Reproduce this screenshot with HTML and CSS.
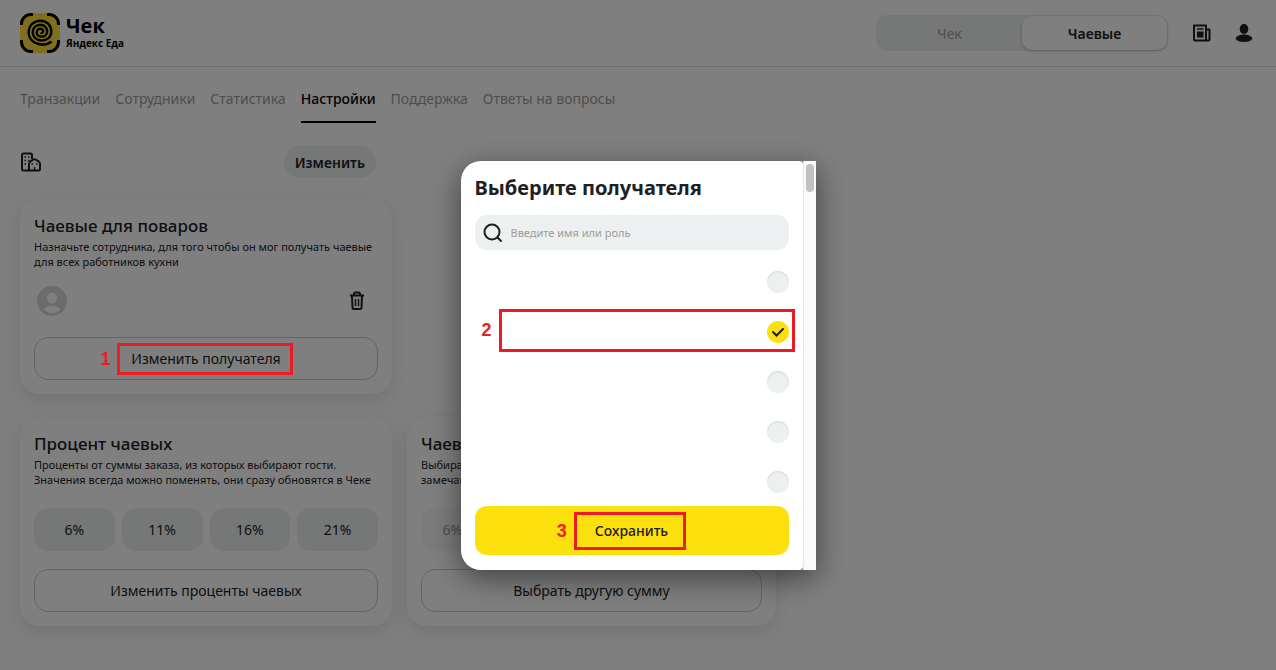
FILE: index.html
```html
<!DOCTYPE html>
<html lang="ru">
<head>
  <meta charset="utf-8">
  <meta name="viewport" content="width=device-width, initial-scale=1">
  <title>Чаевые — Настройки</title>
  <link rel="stylesheet" href="styles.css">
</head>
<body>
  <header class="header">
    <a class="logo" href="#">
      <svg width="40" height="40" viewBox="0 0 40 40" fill="none" stroke="#000">
        <rect width="40" height="40" rx="10" fill="#ffe03a" stroke="none"/>
        <path stroke-width="3" d="M1.5 12V11A9.500 9.500 0 0 1 11 1.500H13M27 1.500H29A9.500 9.500 0 0 1 38.500 11V12M38.500 27V29A9.500 9.500 0 0 1 29 38.500H27M13 38.500H11A9.500 9.500 0 0 1 1.500 29V27"/>
        <path stroke-width="2.400" d="M31.500 28.500C28.500 31 25 31.800 21 31.500C14 31 8.700 26 8.700 19.500C8.700 12.500 14 7.700 20.500 7.700C27 7.700 31.300 12.500 31.300 18.500C31.300 24 27 27.500 21.500 27.500C16.500 27.500 12.700 24 12.700 19.500C12.700 15 16 11.800 20.300 11.800C24.500 11.800 27.200 15 27.200 18.500C27.200 21.800 24.500 23.600 21.500 23.600C18.700 23.600 16.700 21.800 16.700 19.400C16.700 17.200 18.300 15.700 20.300 15.700C22.200 15.700 23.300 17 23.200 18.500C23.100 19.700 22 20.300 20.500 20"/>
      </svg>
      <span class="logo-text">
        <span class="logo-name">Чек</span>
        <span class="logo-brand">Яндекс Еда</span>
      </span>
    </a>
    <div class="header-right">
      <div class="switch">
        <button class="switch-item" type="button">Чек</button>
        <button class="switch-item switch-active" type="button">Чаевые</button>
      </div>
      <button class="icon-button" type="button" aria-label="Новости">
        <svg width="20" height="20" viewBox="0 0 20 20" fill="none" stroke="#21201f" stroke-width="2" stroke-linejoin="round">
          <path d="M2 2.500H14V17.500H3A1 1 0 0 1 2 16.500ZM14 6.500H17.500V16.500A1 1 0 0 1 16.500 17.500H14"/>
          <path d="M5 6H11.500" stroke-width="1.500"/>
          <rect x="5" y="8.500" width="6.500" height="6" fill="#21201f" stroke="none"/>
        </svg>
      </button>
      <button class="icon-button" type="button" aria-label="Профиль">
        <svg width="20" height="20" viewBox="0 0 20 20" fill="#21201f">
          <ellipse cx="10" cy="6" rx="4.300" ry="5"/>
          <ellipse cx="10" cy="15.300" rx="8.200" ry="3.700"/>
        </svg>
      </button>
    </div>
  </header>

  <nav class="tabs">
    <a class="tab" href="#">Транзакции</a>
    <a class="tab" href="#">Сотрудники</a>
    <a class="tab" href="#">Статистика</a>
    <a class="tab tab-active" href="#">Настройки</a>
    <a class="tab" href="#">Поддержка</a>
    <a class="tab" href="#">Ответы на вопросы</a>
  </nav>

  <main class="content">
    <div class="place">
      <svg width="22" height="20" viewBox="0 0 22 20" fill="none" stroke="#21201f" stroke-width="2" stroke-linejoin="round">
        <path d="M9 18.500H3.500A1.500 1.500 0 0 1 2 17V3A1.500 1.500 0 0 1 3.500 1.500H10.500A1.500 1.500 0 0 1 12 3V7"/>
        <path d="M9 18.500V11.500C9 10 13 7.300 14.500 7.300C16 7.300 20 10 20 11.500V17A1.500 1.500 0 0 1 18.500 18.500Z"/>
        <path d="M4.500 5H6M8 5H9.500M4.500 8.500H6M8 8.500H9.500M4.500 12H6M11.500 12H13M16 12H17.500" stroke-width="1.500"/>
        <path d="M14.500 18V15" stroke-width="1.500"/>
      </svg>
      <button class="pill" type="button">Изменить</button>
    </div>

    <div class="cards">
      <section class="card">
        <h2 class="card-title">Чаевые для поваров</h2>
        <p class="card-text">Назначьте сотрудника, для того чтобы он мог получать чаевые для всех работников кухни</p>
        <div class="person">
          <svg width="30" height="30" viewBox="0 0 30 30">
            <circle cx="15" cy="15" r="15" fill="#d4d6da"/>
            <ellipse cx="15" cy="12" rx="5" ry="5.500" fill="#fff"/>
            <path d="M7 23.500C8.500 18.500 21.500 18.500 23.500 23.500C19 28.500 11.500 28.500 7 23.500Z" fill="#fff"/>
          </svg>
          <button class="icon-button" type="button" aria-label="Удалить">
            <svg width="14" height="20" viewBox="0 0 14 20" fill="none" stroke="#21201f" stroke-width="2">
              <path d="M0 4.500H14M4 4V3A1.500 1.500 0 0 1 5.500 1.500H8.500A1.500 1.500 0 0 1 10 3V4M2 5L2.500 16.500A1.500 1.500 0 0 0 4 18H10A1.500 1.500 0 0 0 11.500 16.500L12 5"/>
              <path d="M5.500 8V15M8.500 8V15" stroke-width="1.500"/>
            </svg>
          </button>
        </div>
        <button class="outline-button" type="button">
          <span class="marked">Изменить получателя<span class="mark mark-one"><b class="mark-number">1</b></span></span>
        </button>
      </section>

      <section class="card card-second-row">
        <h2 class="card-title">Процент чаевых</h2>
        <p class="card-text">Проценты от суммы заказа, из которых выбирают гости. Значения всегда можно поменять, они сразу обновятся в Чеке</p>
        <div class="chips">
          <span class="chip">6%</span>
          <span class="chip">11%</span>
          <span class="chip">16%</span>
          <span class="chip">21%</span>
        </div>
        <button class="outline-button" type="button">Изменить проценты чаевых</button>
      </section>

      <section class="card card-second-row">
        <h2 class="card-title">Чаевые</h2>
        <p class="card-text">Выбирайте сумму<br>замечания</p>
        <div class="chips chips-wide">
          <span class="chip chip-muted">6%</span>
        </div>
        <button class="outline-button" type="button">Выбрать другую сумму</button>
      </section>
    </div>
  </main>

  <div class="overlay">
    <div class="modal" role="dialog" aria-labelledby="modal-title">
      <form class="modal-body">
        <h1 class="modal-title" id="modal-title">Выберите получателя</h1>
        <label class="search">
          <svg width="20" height="20" viewBox="0 0 20 20" fill="none" stroke="#21201f" stroke-width="2" stroke-linecap="round">
            <circle cx="9" cy="9" r="7.500"/>
            <path d="M14.500 14.500L18 18"/>
          </svg>
          <input class="search-input" type="text" placeholder="Введите имя или роль" aria-label="Поиск получателя">
        </label>
        <div class="people">
          <label class="option"><input class="radio" type="radio" name="person" aria-label="Получатель 1"></label>
          <label class="option">
            <input class="radio" type="radio" name="person" aria-label="Получатель 2" checked>
            <span class="mark mark-two"><b class="mark-number">2</b></span>
          </label>
          <label class="option"><input class="radio" type="radio" name="person" aria-label="Получатель 3"></label>
          <label class="option"><input class="radio" type="radio" name="person" aria-label="Получатель 4"></label>
          <label class="option option-last"><input class="radio" type="radio" name="person" aria-label="Получатель 5"></label>
        </div>
        <button class="save" type="button">
          <span class="marked">Сохранить<span class="mark mark-three"><b class="mark-number">3</b></span></span>
        </button>
      </form>
      <div class="scrollbar"><div class="scrollbar-thumb"></div></div>
    </div>
  </div>
</body>
</html>
```
FILE: styles.css
```css
* {
  box-sizing: border-box;
}

body {
  margin: 0;
  min-height: 100vh;
  background: #fff;
  color: #21201f;
  font-family: "Noto Sans", "Open Sans", sans-serif;
  font-size: 14px;
}

button {
  padding: 0;
  border: none;
  background: none;
  color: inherit;
  font: inherit;
  cursor: pointer;
}

a {
  color: inherit;
  text-decoration: none;
}

svg {
  display: block;
}

/* Header */
.header {
  display: flex;
  align-items: center;
  justify-content: space-between;
  height: 67px;
  padding: 0 22px 0 20px;
  border-bottom: 1px solid #dcdee0;
}

.logo {
  display: flex;
  align-items: center;
  gap: 6px;
  color: #000;
}

.logo-text {
  display: flex;
  flex-direction: column;
  font-family: "Open Sans", sans-serif;
  font-weight: 700;
}

.logo-name {
  font-size: 20px;
  line-height: 20px;
}

.logo-brand {
  font-size: 10px;
  line-height: 14px;
}

.header-right {
  display: flex;
  align-items: center;
  gap: 22px;
}

.switch {
  display: flex;
  margin-right: 2px;
  padding: 1px;
  border-radius: 11px;
  background: #ecf0f0;
}

.switch-item {
  width: 145px;
  height: 34px;
  border-radius: 10px;
  color: #9e9b98;
}

.switch-active {
  background: #fff;
  box-shadow: 0 1px 3px rgba(0, 0, 0, 0.25);
  color: #21201f;
  font-weight: 600;
}

/* Tabs */
.tabs {
  display: flex;
  gap: 15px;
  padding: 20px 20px 0;
}

.tab {
  height: 36px;
  color: #9e9b98;
  line-height: 24px;
}

.tab-active {
  border-bottom: 2px solid #000;
  color: #000;
  font-weight: 500;
}

/* Settings */
.content {
  padding: 23px 20px 40px;
}

.place {
  display: flex;
  align-items: center;
  justify-content: space-between;
  max-width: 356px;
}

.pill {
  height: 32px;
  padding: 0 11px;
  border-radius: 16px;
  background: #ecf0f0;
  font-weight: 600;
}

.cards {
  display: grid;
  grid-template-columns: 372px 369px;
  gap: 23px 15px;
  margin-top: 21px;
}

.card {
  padding: 14px;
  border-radius: 20px;
  background: #fff;
  box-shadow: 0 6px 20px rgba(117, 131, 142, 0.22);
}

.card-second-row {
  grid-row: 2;
}

.card-title {
  margin: 0;
  font-size: 17px;
  font-weight: 500;
  line-height: 26px;
}

.card-text {
  margin: 0;
  font-size: 11px;
  line-height: 15px;
}

.person {
  display: flex;
  align-items: center;
  justify-content: space-between;
  padding: 17px 14px 21px 3px;
}

.outline-button {
  width: 100%;
  height: 43px;
  border: 1px solid #c8c9cb;
  border-radius: 14px;
}

.chips {
  display: grid;
  grid-template-columns: repeat(4, 1fr);
  gap: 7px;
  padding: 21px 0 18px;
}

.chips-wide {
  grid-template-columns: repeat(5, 1fr);
}

.chip {
  border-radius: 14px;
  background: #ecf0f0;
  line-height: 43px;
  text-align: center;
}

.chip-muted {
  background: #f5f7f7;
  color: #9e9b98;
}

/* Dialog */
.overlay {
  position: fixed;
  inset: 0;
  z-index: 10;
  display: flex;
  align-items: center;
  justify-content: center;
  padding-top: 61px;
  background: rgba(0, 0, 0, 0.5);
}

.modal {
  display: flex;
  width: 355px;
  border-radius: 20px 0 0 20px;
  box-shadow: 0 8px 30px rgba(0, 0, 0, 0.5);
}

.modal-body {
  flex: 1;
  padding: 12px 14px 15px;
  border-radius: 20px 4px 4px 20px;
  background: #fff;
}

.modal-title {
  margin: 0 0 12px;
  font-size: 20px;
  font-weight: 700;
  line-height: 30px;
}

.search {
  display: flex;
  align-items: center;
  gap: 8px;
  height: 35px;
  padding: 0 8px;
  border-radius: 12px;
  background: #ecf0f0;
}

.search-input {
  flex: 1;
  min-width: 0;
  padding: 0;
  border: none;
  outline: none;
  background: none;
  font: inherit;
  font-size: 11px;
}

.search-input::placeholder {
  color: #9e9b98;
}

.people {
  padding: 7px 0 0;
}

.option {
  position: relative;
  display: flex;
  align-items: center;
  justify-content: flex-end;
  height: 50px;
}

.option-last {
  height: 49px;
}

.radio {
  display: grid;
  place-items: center;
  width: 22px;
  height: 22px;
  margin: 0;
  appearance: none;
  border-radius: 50%;
  background: #ecf0f0;
  box-shadow: inset 0 1px 2px rgba(0, 0, 0, 0.1);
}

.radio:checked {
  background: #fce00d;
  box-shadow: none;
}

.radio:checked::before {
  content: "";
  width: 12px;
  height: 10px;
  background: url("data:image/svg+xml,%3Csvg xmlns='http://www.w3.org/2000/svg' viewBox='0 0 12 10' fill='none' stroke='%2321201f' stroke-width='2' stroke-linecap='round'%3E%3Cpath d='M1 5L4.500 8.500L11 2'/%3E%3C/svg%3E");
}

.save {
  display: block;
  width: 100%;
  height: 49px;
  border-radius: 12px;
  background: #fce00d;
  font-weight: 500;
}

.scrollbar {
  width: 13px;
  padding: 3px 2px 0;
  border-left: 1px solid #e8e8e8;
  background: #fafafa;
}

.scrollbar-thumb {
  height: 28px;
  border-radius: 4px;
  background: #c1c1c1;
}

/* Numbered step marks */
.marked {
  position: relative;
}

.mark {
  position: absolute;
  z-index: 20;
  border: 3px solid #ed1c24;
}

.mark-one {
  inset: -6px -12px -7px -14px;
}

.mark-two {
  inset: 2px -6px 5px 24px;
}

.mark-three {
  inset: -9px -18px -10px -21px;
}

.mark-number {
  position: absolute;
  top: 0;
  bottom: 0;
  right: 100%;
  display: flex;
  align-items: center;
  margin-right: 10px;
  color: #ed1c24;
  font-family: "Liberation Sans", sans-serif;
  font-size: 18px;
}
```
